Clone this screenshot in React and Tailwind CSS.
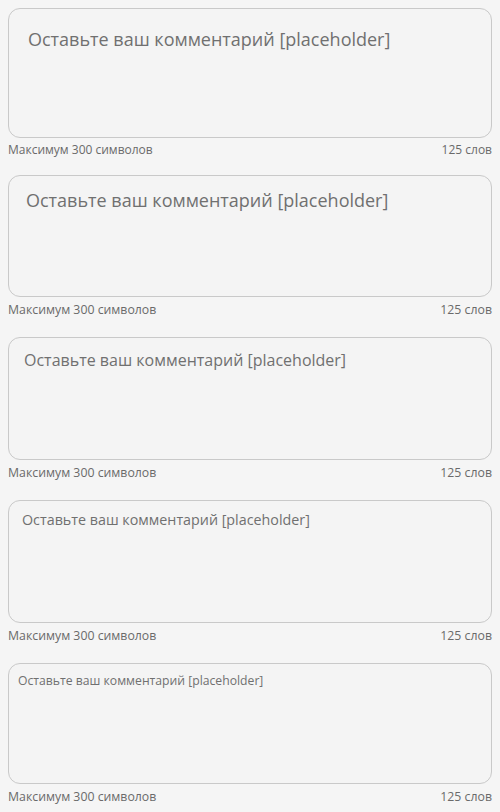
import React from 'react';

const variants = [
    { box: 'h-[130px] pl-[19px] pr-4 pt-[17px] text-[18px] leading-[26px]', caption: 'mt-[4px] text-[12px]', gap: 'mb-[17px]' },
    { box: 'h-[122px] pl-[17px] pr-4 pt-[12px] text-[18px] leading-[24px]', caption: 'mt-[5px] text-[12.3px]', gap: 'mb-[19px]' },
    { box: 'h-[123px] pl-[15px] pr-4 pt-[11px] text-[16px] leading-[22px]', caption: 'mt-[5px] text-[12.3px]', gap: 'mb-[19px]' },
    { box: 'h-[123px] pl-[13px] pr-3 pt-[9px] text-[14.3px] leading-[20px]', caption: 'mt-[5px] text-[12.3px]', gap: 'mb-[19px]' },
    { box: 'h-[121px] pl-[9px] pr-3 pt-[8px] text-[12.2px] leading-[18px]', caption: 'mt-[5px] text-[12.3px]', gap: '' },
];

function CommentField({ box, caption, gap }) {
    return (
        <div className={gap}>
            <textarea
                placeholder="Оставьте ваш комментарий [placeholder]"
                className={`block w-full resize-none rounded-[12px] border border-[#c9c9c9] bg-[#f4f4f4] text-[#555] placeholder:text-[#707070] focus:outline-none ${box}`}
            />
            <div className={`flex justify-between leading-[16px] text-[#6a6a6a] ${caption}`}>
                <span>Максимум 300 символов</span>
                <span>125 слов</span>
            </div>
        </div>
    );
}

export default function App() {
    return (
        <div className="min-h-[812px] bg-[#f5f5f5] p-2 font-['Open_Sans',sans-serif]">
            {variants.map((v, i) => (
                <CommentField key={i} {...v} />
            ))}
        </div>
    );
}
